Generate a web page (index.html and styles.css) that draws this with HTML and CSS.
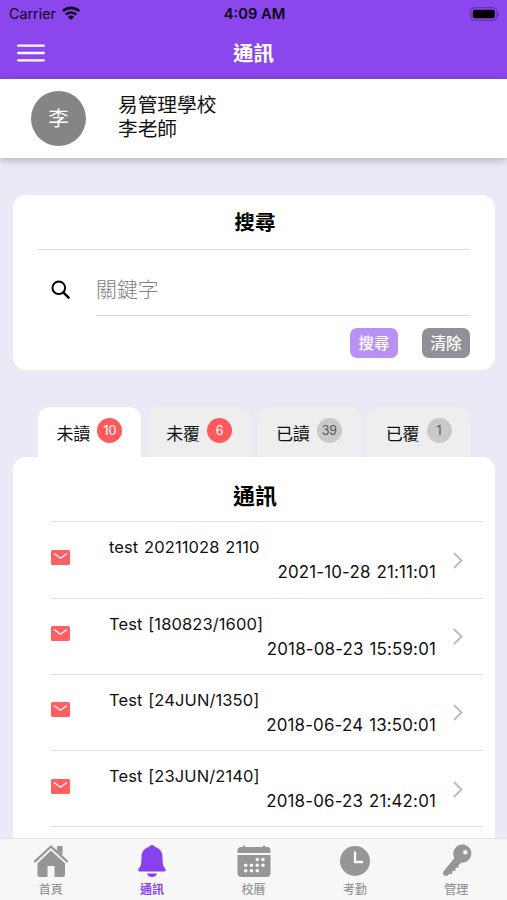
FILE: index.html
```html
<!DOCTYPE html>
<html lang="zh-Hant">
<head>
<meta charset="utf-8">
<meta name="viewport" content="width=device-width, initial-scale=1">
<title>通訊</title>
<link rel="stylesheet" href="styles.css">
</head>
<body>
<svg width="0" height="0" class="defs">
  <symbol id="mail" viewBox="0 0 19 15"><rect width="19" height="15" rx="1.6" fill="#ff5f60"/><path d="M3 3.400l6.500 4.900L16 3.400" fill="none" stroke="#fff" stroke-width="1.300"/></symbol>
  <symbol id="chevron" viewBox="0 0 10 17"><path d="M.9 1l7.600 7.500L.9 16" fill="none" stroke="#bdbdbf" stroke-width="2"/></symbol>
</svg>
<div class="app">
  <header class="topbar">
    <div class="status">
      <div class="carrier"><span>Carrier</span>
        <svg width="18" height="14" viewBox="0 0 18 14" fill="none" stroke="#0b0318" stroke-width="2.600"><path d="M.9 5.200a11.500 11.500 0 0 1 16.200 0M3.800 8.700a7.300 7.300 0 0 1 10.400 0"/><path d="M9 14L5.900 10.900a4.300 4.300 0 0 1 6.200 0z" fill="#0b0318" stroke="none"/></svg>
      </div>
      <div class="time">4:09 AM</div>
      <svg class="battery" width="30" height="14" viewBox="0 0 30 14"><rect x=".8" y=".7" width="26" height="12.600" rx="3.500" fill="none" stroke="#5d2e9d"/><rect x="2.800" y="2.700" width="22" height="8.600" rx="1.800"/><path d="M28 4.700q2 2.300 0 4.600z" fill="#5d2e9d"/></svg>
    </div>
    <div class="navbar">
      <svg class="burger" width="28" height="18" viewBox="0 0 28 18" stroke="#fff" stroke-width="2.300" stroke-linecap="round"><path d="M1.200 1.700h25.600M1.200 9h25.600M1.200 16.300h25.600"/></svg>
      <h1>通訊</h1>
    </div>
  </header>
  <section class="profile">
    <div class="avatar">李</div>
    <div class="names"><div>易管理學校</div><div>李老師</div></div>
  </section>
  <main>
    <section class="search">
      <h2>搜尋</h2>
      <div class="field">
        <svg width="20" height="20" viewBox="0 0 20 20" fill="none" stroke="#000" stroke-width="2"><circle cx="7.800" cy="7.800" r="6.300"/><path d="M12.300 12.300l6 6" stroke-width="2.500"/></svg>
        <div class="keyword">關鍵字</div>
      </div>
      <div class="buttons"><span class="btn go">搜尋</span><span class="btn clear">清除</span></div>
    </section>
    <nav class="tabs">
      <div class="tab active">未讀<b>10</b></div>
      <div class="tab alert">未覆<b>6</b></div>
      <div class="tab">已讀<b>39</b></div>
      <div class="tab">已覆<b>1</b></div>
    </nav>
    <section class="messages">
      <h2>通訊</h2>
      <div class="row"><svg class="mail"><use href="#mail"/></svg><div class="text"><div>test 20211028 2110</div><time>2021-10-28 21:11:01</time></div><svg class="chev"><use href="#chevron"/></svg></div>
      <div class="row"><svg class="mail"><use href="#mail"/></svg><div class="text"><div>Test [180823/1600]</div><time>2018-08-23 15:59:01</time></div><svg class="chev"><use href="#chevron"/></svg></div>
      <div class="row"><svg class="mail"><use href="#mail"/></svg><div class="text"><div>Test [24JUN/1350]</div><time>2018-06-24 13:50:01</time></div><svg class="chev"><use href="#chevron"/></svg></div>
      <div class="row"><svg class="mail"><use href="#mail"/></svg><div class="text"><div>Test [23JUN/2140]</div><time>2018-06-23 21:42:01</time></div><svg class="chev"><use href="#chevron"/></svg></div>
      <div class="row"></div>
    </section>
  </main>
  <footer class="bottom">
    <div class="item"><svg viewBox="0 0 36 34"><path d="M2 17.300L18 2.500l16 14.800" fill="none" stroke="currentColor" stroke-width="2.300" stroke-linecap="round" stroke-linejoin="round"/><path d="M24 2h5.500v9.500L24 6.500z"/><path d="M18 6.500L32 19.200V31q0 2-2 2h-8.500V22h-7v11H6.500q-2 0-2-2V19.200z"/></svg><span>首頁</span></div>
    <div class="item on"><svg viewBox="0 0 36 34"><path d="M18 1q2.300 0 3 2c5 1.300 7.500 5.200 7.500 10 0 7 .7 9.400 3 12q1 2.300-1.300 2.500H5.800q-2.300-.2-1.300-2.500c2.300-2.600 3-5 3-12 0-4.800 2.500-8.700 7.500-10q.7-2 3-2z"/><path d="M13 29.500h10q-1 3.500-5 3.500t-5-3.500z"/></svg><span>通訊</span></div>
    <div class="item"><svg viewBox="0 0 36 34"><path d="M5 3H7V2q1-1.600 2 0v1h18V2q1-1.600 2 0v1h2.500q3 0 3 3.500V9h-33V6.500Q1.500 3 5 3z"/><path d="M1.500 11h33v18q0 4-4 4h-25q-4 0-4-4z"/><g fill="#f7f7f8"><circle cx="21.300" cy="15.500" r="1.800"/><circle cx="27" cy="15.500" r="1.800"/><circle cx="9.700" cy="21.200" r="1.800"/><circle cx="15.500" cy="21.200" r="1.800"/><circle cx="21.300" cy="21.200" r="1.800"/><circle cx="27" cy="21.200" r="1.800"/><circle cx="9.700" cy="26.800" r="1.800"/><circle cx="15.500" cy="26.800" r="1.800"/><circle cx="21.300" cy="26.800" r="1.800"/></g></svg><span>校曆</span></div>
    <div class="item"><svg viewBox="0 0 36 34"><circle cx="18" cy="17" r="15"/><path d="M18 7.500V18h8" fill="none" stroke="#f7f7f8" stroke-width="2.300"/></svg><span>考勤</span></div>
    <div class="item"><svg viewBox="0 0 36 34"><path d="M16.500 14a9 9 0 1 1 7.200 4.600l-3.200 2.700.2 2.500-2.500-.2-.8.800.2 2.500-2.600-.2-.8.800.2 2.500-2.700-.3-3 2.300q-2.300.5-3.900-2.300l.6-2.300z"/><circle cx="27.300" cy="8.300" r="2.300" fill="#f7f7f8"/></svg><span>管理</span></div>
  </footer>
</div>
</body>
</html>
```
FILE: styles.css
```css
* { box-sizing: border-box; }
body { margin: 0; font-family: Inter, "Noto Sans CJK TC", sans-serif; color: #111; }
h1, h2 { margin: 0; font-weight: 600; }
.defs { position: absolute; }
.app { width: 507px; height: 900px; overflow: hidden; display: flex; flex-direction: column; background: #ece8f5; }
.topbar { height: 79px; flex: none; background: #8b46ed; }
.status { height: 27px; padding: 0 7px 0 9px; display: grid; grid-template-columns: 1fr auto 1fr; align-items: center; font-size: 14.300px; color: #0b0318; }
.carrier { display: flex; align-items: center; gap: 6px; }
.carrier svg { margin-top: -2px; }
.time { font-weight: 600; font-size: 14.700px; }
.battery { justify-self: end; }
.navbar { height: 52px; display: grid; grid-template-columns: 1fr auto 1fr; align-items: center; padding: 0 17px; }
.burger { margin-top: -1px; }
h1 { color: #fff; font-size: 20.500px; line-height: 52px; padding-top: 1px; }
.profile { position: relative; flex: none; height: 79px; padding: 0 31px; display: flex; align-items: center; gap: 32px; background: #fff; box-shadow: 0 2px 8px rgba(0,0,0,.25); }
.avatar { width: 55px; height: 55px; border-radius: 50%; background: #858585; color: #fff; text-align: center; line-height: 56px; font-size: 20.500px; }
.names { font-size: 19.700px; line-height: 24.500px; margin-top: -3px; }
main { flex: 1; min-height: 0; padding: 37px 12px 0 13px; }
.search { height: 175px; background: #fff; border-radius: 13px; padding: 0 25px; }
h2 { text-align: center; color: #000; font-size: 20.500px; }
.search h2 { height: 55px; line-height: 56px; border-bottom: 1px solid #dcdcdd; padding-left: 2px; }
.field { display: flex; align-items: center; height: 66px; padding-left: 13px; gap: 25px; }
.field svg { margin-top: 13px; }
.keyword { flex: 1; height: 66px; border-bottom: 1px solid #d4d4d6; color: #808080; font-size: 20.900px; line-height: 79px; font-weight: 300; }
.buttons { display: flex; justify-content: flex-end; gap: 24px; margin-top: 12px; }
.btn { width: 48px; height: 30px; border-radius: 7px; color: #fff; font-size: 15.500px; font-weight: 500; line-height: 31px; text-align: center; }
.go { background: #b990f3; }
.clear { background: #909197; }
.tabs { margin: 37px 25px 0; height: 50px; display: flex; gap: 7px; }
.tab { flex: 1; border-radius: 12px 12px 0 0; background: #eee; display: flex; justify-content: center; gap: 7px; font-size: 17px; line-height: 54px; box-shadow: 0 0 3px #eee; }
.tab b { width: 25px; height: 25px; border-radius: 50%; margin-top: 11px; background: #c9c9c9; color: #555; font-size: 12.500px; font-weight: 400; line-height: 25px; text-align: center; }
.tab.active { background: #fff; box-shadow: none; }
.active b, .alert b { background: #ff595b; color: #fff; }
.messages { position: relative; background: #fff; border-radius: 13px 13px 0 0; padding: 0 12px 0 37px; height: 390px; }
.messages h2 { font-size: 22px; height: 64.250px; line-height: 78px; padding-right: 23px; }
.row { height: 76.250px; border-top: 1px solid #e3e3e5; display: flex; }
.mail { width: 19px; height: 15px; margin: 27.500px 0 0 1px; flex: none; }
.text { width: 327px; margin-left: 39px; padding-top: 12px; font-size: 16.500px; line-height: 26px; letter-spacing: .1px; word-spacing: 1px; }
.text time { display: block; text-align: right; font-size: 16.900px; letter-spacing: .17px; line-height: 25px; }
.chev { width: 10px; height: 17px; margin: 29.500px 0 0 17px; }
.bottom { position: relative; flex: none; height: 62px; background: #f7f7f8; border-top: 1px solid #e4e4e6; display: flex; color: #969696; }
.item { flex: 1; display: flex; flex-direction: column; align-items: center; padding-top: 5px; }
.item svg { width: 36px; height: 34px; fill: currentColor; }
.item span { font-size: 12px; line-height: 18px; margin-top: 3px; font-weight: 500; }
.item.on { color: #8741ed; }
.on span { font-weight: 600; }
```
